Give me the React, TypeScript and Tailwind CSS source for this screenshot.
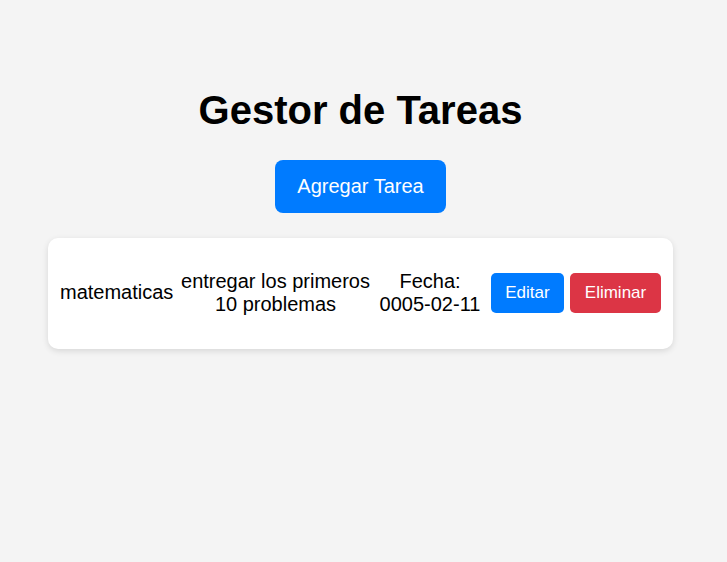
import React from "react";

export default function App() {
  return (
    <div
      className="min-h-[562px] w-full bg-[#f4f4f4] text-black"
      style={{ fontFamily: '"Liberation Sans", Arial, sans-serif' }}
    >
      <div className="w-[721px] flex flex-col items-center pt-[87px]">
        <h1 className="text-[40px] leading-[46px] font-bold">Gestor de Tareas</h1>
        <button className="mt-[27px] h-[53px] w-[171px] rounded-[8px] bg-[#007bff] text-white text-[20px] leading-[23px]">
          Agregar Tarea
        </button>
        <div className="mt-[25px] w-[625px] h-[111px] bg-white rounded-[10px] shadow-[0_2px_6px_rgba(0,0,0,0.12)] flex items-center pl-[12px] pr-[12px] pb-[2px] text-[20px] leading-[23px]">
          <span className="w-[113px] whitespace-nowrap">matematicas</span>
          <span className="ml-[8px] w-[189px] text-center">entregar los primeros 10 problemas</span>
          <span className="ml-[9px] w-[102px] text-center">Fecha: 0005-02-11</span>
          <button className="ml-[10px] w-[73px] h-[40px] rounded-[5px] bg-[#007bff] text-white text-[17px]">
            Editar
          </button>
          <button className="ml-[6px] w-[91px] h-[40px] rounded-[5px] bg-[#dc3545] text-white text-[17px]">
            Eliminar
          </button>
        </div>
      </div>
    </div>
  );
}
